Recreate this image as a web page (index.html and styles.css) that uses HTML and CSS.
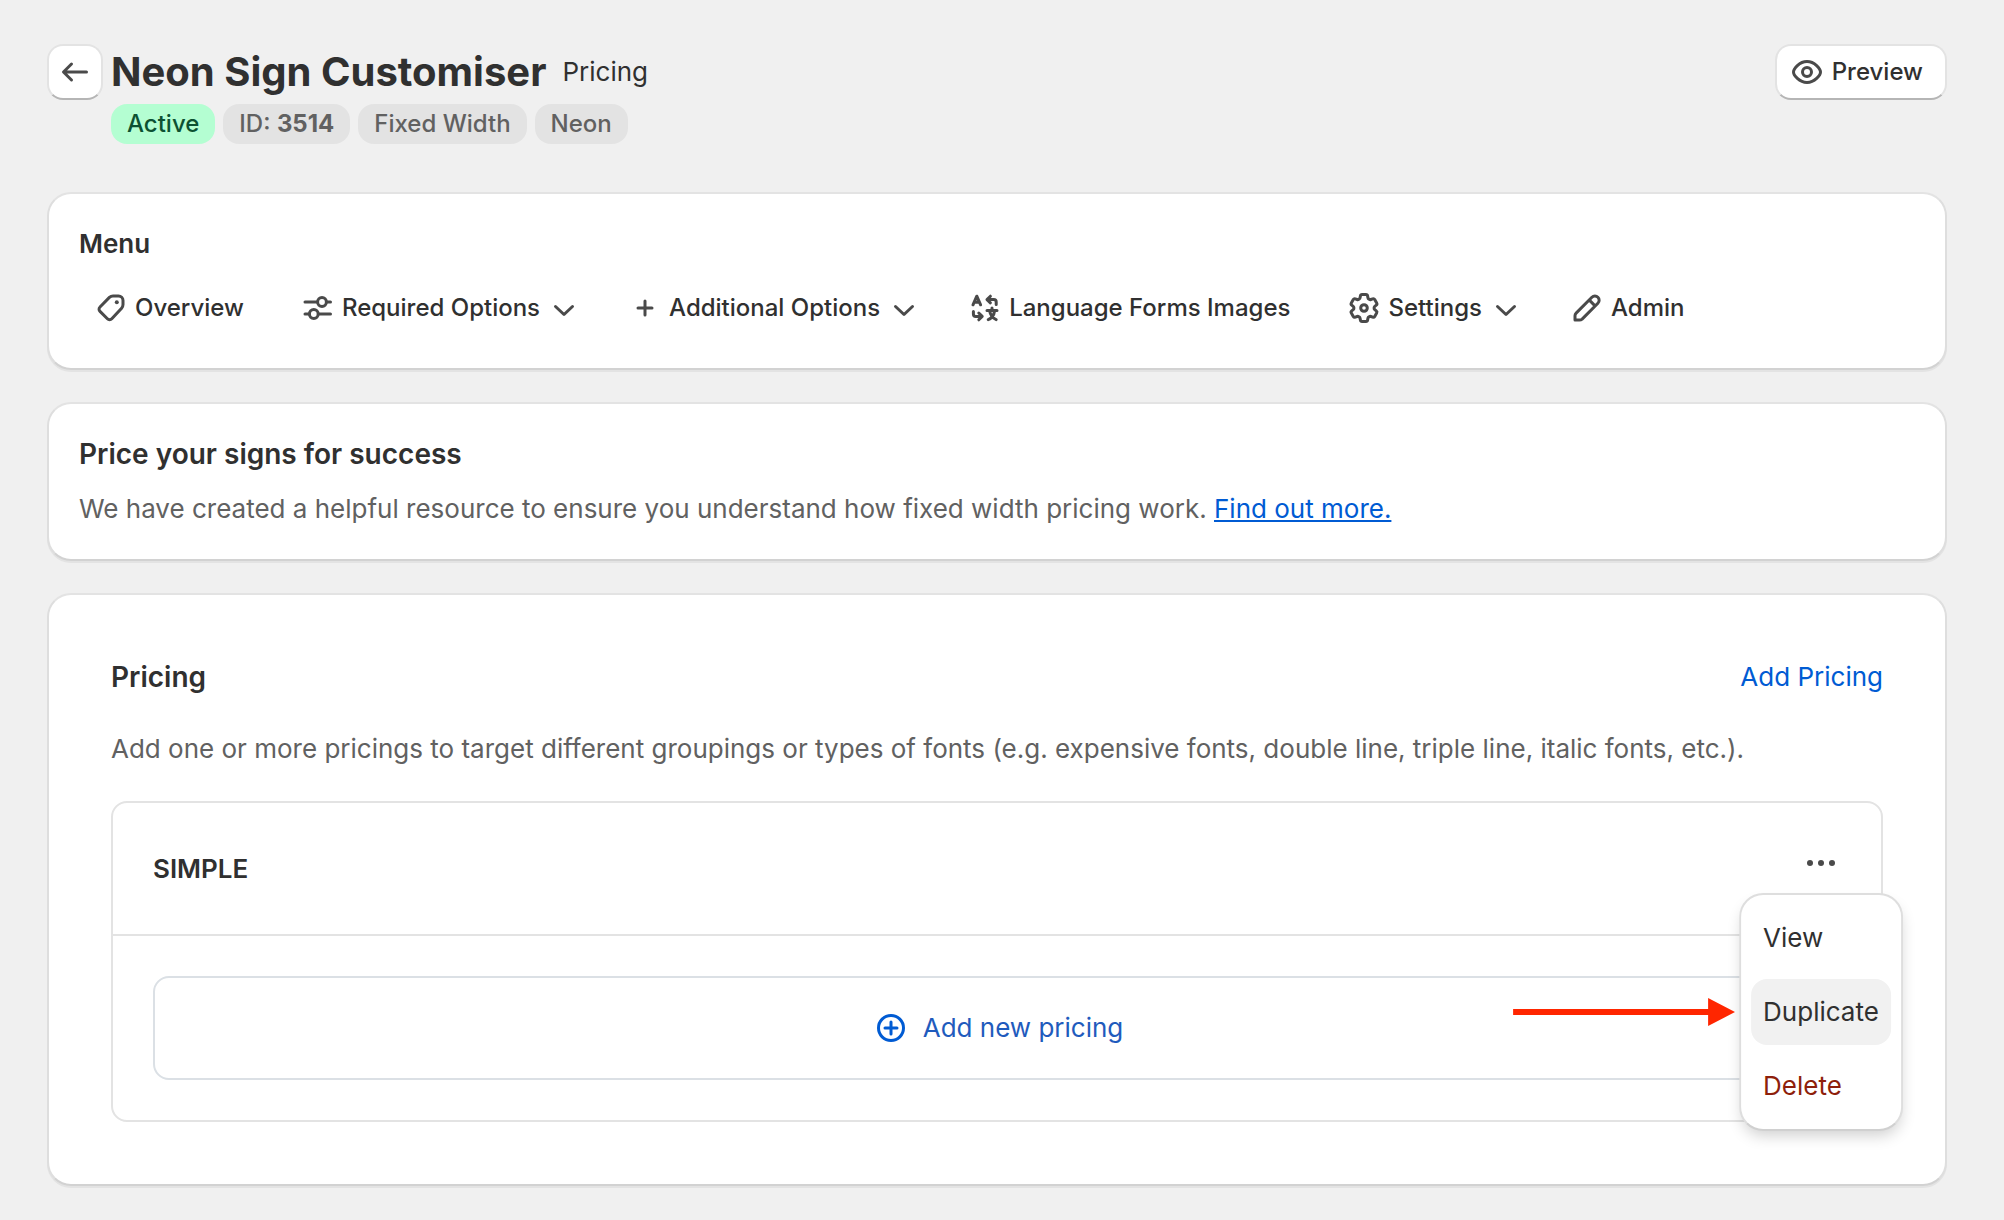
FILE: index.html
```html
<!DOCTYPE html>
<html lang="en">
<head>
    <meta charset="utf-8">
    <title>Neon Sign Customiser - Pricing</title>
    <link rel="stylesheet" href="styles.css">
</head>
<body>
    <div class="page">
        <header class="page-header">
            <button class="btn btn-back" type="button" aria-label="Back">
                <svg class="icon" viewBox="0 0 20 20"><path d="M15.75 10H4.5M8.25 6l-4 4 4 4"/></svg>
            </button>
            <div class="page-title">
                <div class="title-row">
                    <h1>Neon Sign Customiser</h1>
                    <span class="subtitle">Pricing</span>
                </div>
                <div class="badges">
                    <span class="badge badge-success">Active</span>
                    <span class="badge">ID: <b>3514</b></span>
                    <span class="badge">Fixed Width</span>
                    <span class="badge">Neon</span>
                </div>
            </div>
            <button class="btn btn-preview" type="button">
                <svg class="icon" viewBox="0 0 20 20"><path d="M3.25 10c0-1.6 2.9-5.25 6.75-5.25s6.75 3.65 6.75 5.25-2.9 5.25-6.75 5.25S3.25 11.6 3.25 10z"/><circle cx="10" cy="10" r="2.25"/></svg>
                Preview
            </button>
        </header>

        <section class="card">
            <h2 class="menu-title">Menu</h2>
            <nav class="menu">
                <a class="menu-item" href="#">
                    <svg class="icon" viewBox="0 0 20 20"><path d="M11 4h2.75A2.25 2.25 0 0 1 16 6.25V8.3c0 .7-.25 1.3-.7 1.8l-4.9 5.3a1.5 1.5 0 0 1-2.2 0l-3.7-3.7a1.5 1.5 0 0 1 0-2.2l4.7-4.8c.5-.45 1.1-.7 1.8-.7z"/><circle class="fill" cx="12.9" cy="7.1" r="1"/></svg>
                    Overview
                </a>
                <button class="menu-item" type="button">
                    <svg class="icon" viewBox="0 0 20 20"><path d="M3.5 7h6.25M14.25 7h2M3.5 13h2.15M10.15 13h6.1"/><circle cx="12" cy="7" r="2.2"/><circle cx="7.9" cy="13" r="2.2"/></svg>
                    Required Options
                    <svg class="icon" viewBox="0 0 20 20"><path d="M5.75 9.25l4.25 4 4.25-4"/></svg>
                </button>
                <button class="menu-item" type="button">
                    <svg class="icon" viewBox="0 0 20 20"><path d="M10 6.5v7M6.5 10h7"/></svg>
                    Additional Options
                    <svg class="icon" viewBox="0 0 20 20"><path d="M5.75 9.25l4.25 4 4.25-4"/></svg>
                </button>
                <a class="menu-item" href="#">
                    <svg class="icon" viewBox="0 0 20 20"><path d="M4 8.4l1.9-4.3 1.9 4.3M4.7 7.1h2.4M15.6 8.3V7c0-.7-.5-1.2-1.2-1.2h-3M12.7 4.1L11 5.8l1.7 1.6M4.2 11.7V13c0 .7.5 1.2 1.2 1.2h2.8M6.9 12.5l1.7 1.7-1.7 1.7M11 11.2h5M13.5 10v1.2M11.6 15.8c1.9-.7 2.9-2.2 3.2-4.4M15.6 15.8c-1.9-.7-2.9-2.2-3.3-4.4"/></svg>
                    Language Forms Images
                </a>
                <button class="menu-item" type="button">
                    <svg class="icon" viewBox="0 0 20 20"><g transform="translate(1 1) scale(.75)" stroke-width="2"><path d="M9.594 3.94c.09-.542.56-.94 1.11-.94h2.593c.55 0 1.02.398 1.11.94l.213 1.281c.063.374.313.686.645.87.074.04.147.083.22.127.325.196.72.257 1.075.124l1.217-.456a1.125 1.125 0 0 1 1.37.49l1.296 2.247a1.125 1.125 0 0 1-.26 1.431l-1.003.827c-.293.241-.438.613-.43.992a7.723 7.723 0 0 1 0 .255c-.008.378.137.75.43.991l1.004.827c.424.35.534.955.26 1.43l-1.298 2.247a1.125 1.125 0 0 1-1.369.491l-1.217-.456c-.355-.133-.75-.072-1.076.124a6.47 6.47 0 0 1-.22.128c-.331.183-.581.495-.644.869l-.213 1.281c-.09.543-.56.94-1.11.94h-2.594c-.55 0-1.019-.398-1.11-.94l-.213-1.281c-.062-.374-.312-.686-.644-.87a6.52 6.52 0 0 1-.22-.127c-.325-.196-.72-.257-1.076-.124l-1.217.456a1.125 1.125 0 0 1-1.369-.49l-1.297-2.247a1.125 1.125 0 0 1 .26-1.431l1.004-.827c.292-.24.437-.613.43-.991a6.932 6.932 0 0 1 0-.255c.007-.38-.138-.751-.43-.992l-1.004-.827a1.125 1.125 0 0 1-.26-1.43l1.297-2.247a1.125 1.125 0 0 1 1.37-.491l1.216.456c.356.133.751.072 1.076-.124.072-.044.146-.086.22-.128.332-.183.582-.495.644-.869l.214-1.28z"/><circle cx="12" cy="12" r="2.2"/></g></svg>
                    Settings
                    <svg class="icon" viewBox="0 0 20 20"><path d="M5.75 9.25l4.25 4 4.25-4"/></svg>
                </button>
                <a class="menu-item" href="#">
                    <svg class="icon" viewBox="0 0 20 20"><path d="M4 15.9v-2c0-.5.2-1 .55-1.35l7.9-7.9a2.1 2.1 0 0 1 3 3l-7.9 7.9c-.35.3-.8.45-1.3.45H4zM11.3 6.2l2.6 2.6"/></svg>
                    Admin
                </a>
            </nav>
        </section>

        <section class="card">
            <h2>Price your signs for success</h2>
            <p class="help-text">We have created a helpful resource to ensure you understand how fixed width pricing work. <a href="#">Find out more.</a></p>
        </section>

        <section class="card">
            <div class="pricing">
                <div class="pricing-header">
                    <h2>Pricing</h2>
                    <button class="btn-plain" type="button">Add Pricing</button>
                </div>
                <p class="pricing-text">Add one or more pricings to target different groupings or types of fonts (e.g. expensive fonts, double line, triple line, italic fonts, etc.).</p>

                <div class="price-group">
                    <div class="group-header">
                        <h3>SIMPLE</h3>
                        <div class="actions">
                            <button class="btn-dots" type="button" aria-label="Actions">
                                <svg class="icon" viewBox="0 0 20 20"><g class="fill"><circle cx="4.5" cy="10" r="1.5"/><circle cx="10" cy="10" r="1.5"/><circle cx="15.5" cy="10" r="1.5"/></g></svg>
                            </button>
                            <!-- Actions menu -->
                            <ul class="popover">
                                <li><button type="button">View</button></li>
                                <li>
                                    <button class="active" type="button">Duplicate</button>
                                    <svg class="arrow" viewBox="0 0 222 28"><path d="M0 11h195V0l27 14-27 14V17H0z"/></svg>
                                </li>
                                <li><button class="destructive" type="button">Delete</button></li>
                            </ul>
                        </div>
                    </div>
                    <div class="group-body">
                        <button class="btn-add" type="button">
                            <svg class="icon" viewBox="0 0 20 20"><circle cx="10" cy="10" r="6.25"/><path d="M10 7v6M7 10h6"/></svg>
                            Add new pricing
                        </button>
                    </div>
                </div>
            </div>
        </section>
    </div>
</body>
</html>
```

FILE: styles.css
```css
* {
    box-sizing: border-box;
}

body {
    margin: 0;
    background-color: #f0f0f0;
    color: #303030;
    font-family: Inter, "Liberation Sans", sans-serif;
    font-size: 26px;
    line-height: 40px;
}

h1, h2, h3, p, ul {
    margin: 0;
    padding: 0;
}

button {
    font: inherit;
    color: inherit;
    border: none;
    background: none;
    padding: 0;
    cursor: pointer;
}

.icon {
    flex: none;
    width: 40px;
    height: 40px;
    fill: none;
    stroke: #4a4a4a;
    stroke-width: 1.5;
    stroke-linecap: round;
    stroke-linejoin: round;
}

.icon .fill {
    fill: #4a4a4a;
    stroke: none;
}

.page {
    padding: 44px 57px 32px 47px;
}

/* Header */
.page-header {
    display: flex;
    align-items: flex-start;
    margin-bottom: 48px;
}

.btn {
    display: flex;
    align-items: center;
    justify-content: center;
    height: 56px;
    background-color: #fff;
    border: 2px solid #e3e3e3;
    border-bottom-color: #b5b5b5;
    border-radius: 16px;
    font-size: 24px;
    font-weight: 550;
}

.btn-back {
    width: 56px;
}

.btn-preview {
    gap: 5px;
    padding: 0 22px 0 10px;
}

.page-title {
    flex: 1;
    margin-left: 8px;
}

.title-row {
    display: flex;
    align-items: center;
    gap: 16px;
    min-height: 56px;
}

h1 {
    font-size: 40px;
    font-weight: 700;
}

.badges {
    display: flex;
    gap: 8px;
    margin-top: 4px;
}

.badge {
    padding: 0 16px;
    border-radius: 16px;
    background-color: #e3e3e3;
    color: #616161;
    font-size: 24px;
    font-weight: 450;
}

.badge-success {
    background-color: #b4fed2;
    color: #0c5132;
}

/* Cards */
.card {
    padding: 30px;
    margin-bottom: 32px;
    background-color: #fff;
    border: 2px solid #dedede;
    border-top-color: #e3e3e3;
    border-bottom-color: #d2d2d2;
    border-radius: 24px;
    box-shadow: 0 2px 0 #e3e3e3;
}

.card:last-child {
    margin-bottom: 0;
}

h2 {
    font-size: 28px;
    font-weight: 600;
}

.menu-title {
    font-size: 26px;
}

.menu {
    display: flex;
    flex-wrap: wrap;
    gap: 0 41px;
    margin-top: 16px;
    padding: 0 0 2px 12px;
}

.menu-item {
    display: flex;
    align-items: center;
    gap: 4px;
    height: 56px;
    color: #303030;
    font-size: 24px;
    font-weight: 550;
    text-decoration: none;
}

a.menu-item {
    padding-right: 13px;
}

.help-text {
    margin-top: 15px;
    color: #616161;
}

.help-text a {
    color: #005bd3;
}

/* Pricing */
.pricing {
    padding: 32px;
}

.pricing-header {
    display: flex;
    justify-content: space-between;
}

.btn-plain {
    color: #005bd3;
}

.pricing-text {
    margin: 32px 0;
    color: #616161;
}

.price-group {
    border: 2px solid #e3e3e3;
    border-radius: 16px;
}

.group-header {
    display: flex;
    align-items: center;
    justify-content: space-between;
    min-height: 133px;
    padding: 32px 40px;
    border-bottom: 2px solid #e3e3e3;
}

h3 {
    font-size: 26px;
    font-weight: 600;
}

.actions {
    position: relative;
    align-self: flex-start;
}

.btn-dots {
    display: flex;
    align-items: center;
    height: 56px;
}

.popover {
    position: absolute;
    top: calc(100% + 2px);
    left: 50%;
    transform: translateX(-50%);
    display: flex;
    flex-direction: column;
    gap: 8px;
    padding: 10px;
    background-color: #fff;
    border: 2px solid #dedede;
    border-bottom-color: #d0d0d0;
    border-radius: 24px;
    box-shadow: 0 8px 16px -4px rgba(0, 0, 0, 0.2);
    list-style: none;
}

.popover li {
    position: relative;
}

.popover button {
    width: 100%;
    height: 66px;
    padding: 0 12px;
    border-radius: 16px;
    text-align: left;
}

.popover .active {
    background-color: #f1f1f1;
}

.popover .destructive {
    color: #8e1f0b;
}

.arrow {
    position: absolute;
    top: 50%;
    right: calc(100% + 16px);
    width: 222px;
    height: 28px;
    transform: translateY(-50%);
    fill: #ff2600;
}

.group-body {
    padding: 40px;
}

.btn-add {
    display: flex;
    align-items: center;
    justify-content: center;
    gap: 12px;
    width: 100%;
    height: 104px;
    border: 2px solid #dbe0e5;
    border-radius: 16px;
    color: #1f5bbd;
}

.btn-add .icon {
    stroke: #005bd3;
}
```
